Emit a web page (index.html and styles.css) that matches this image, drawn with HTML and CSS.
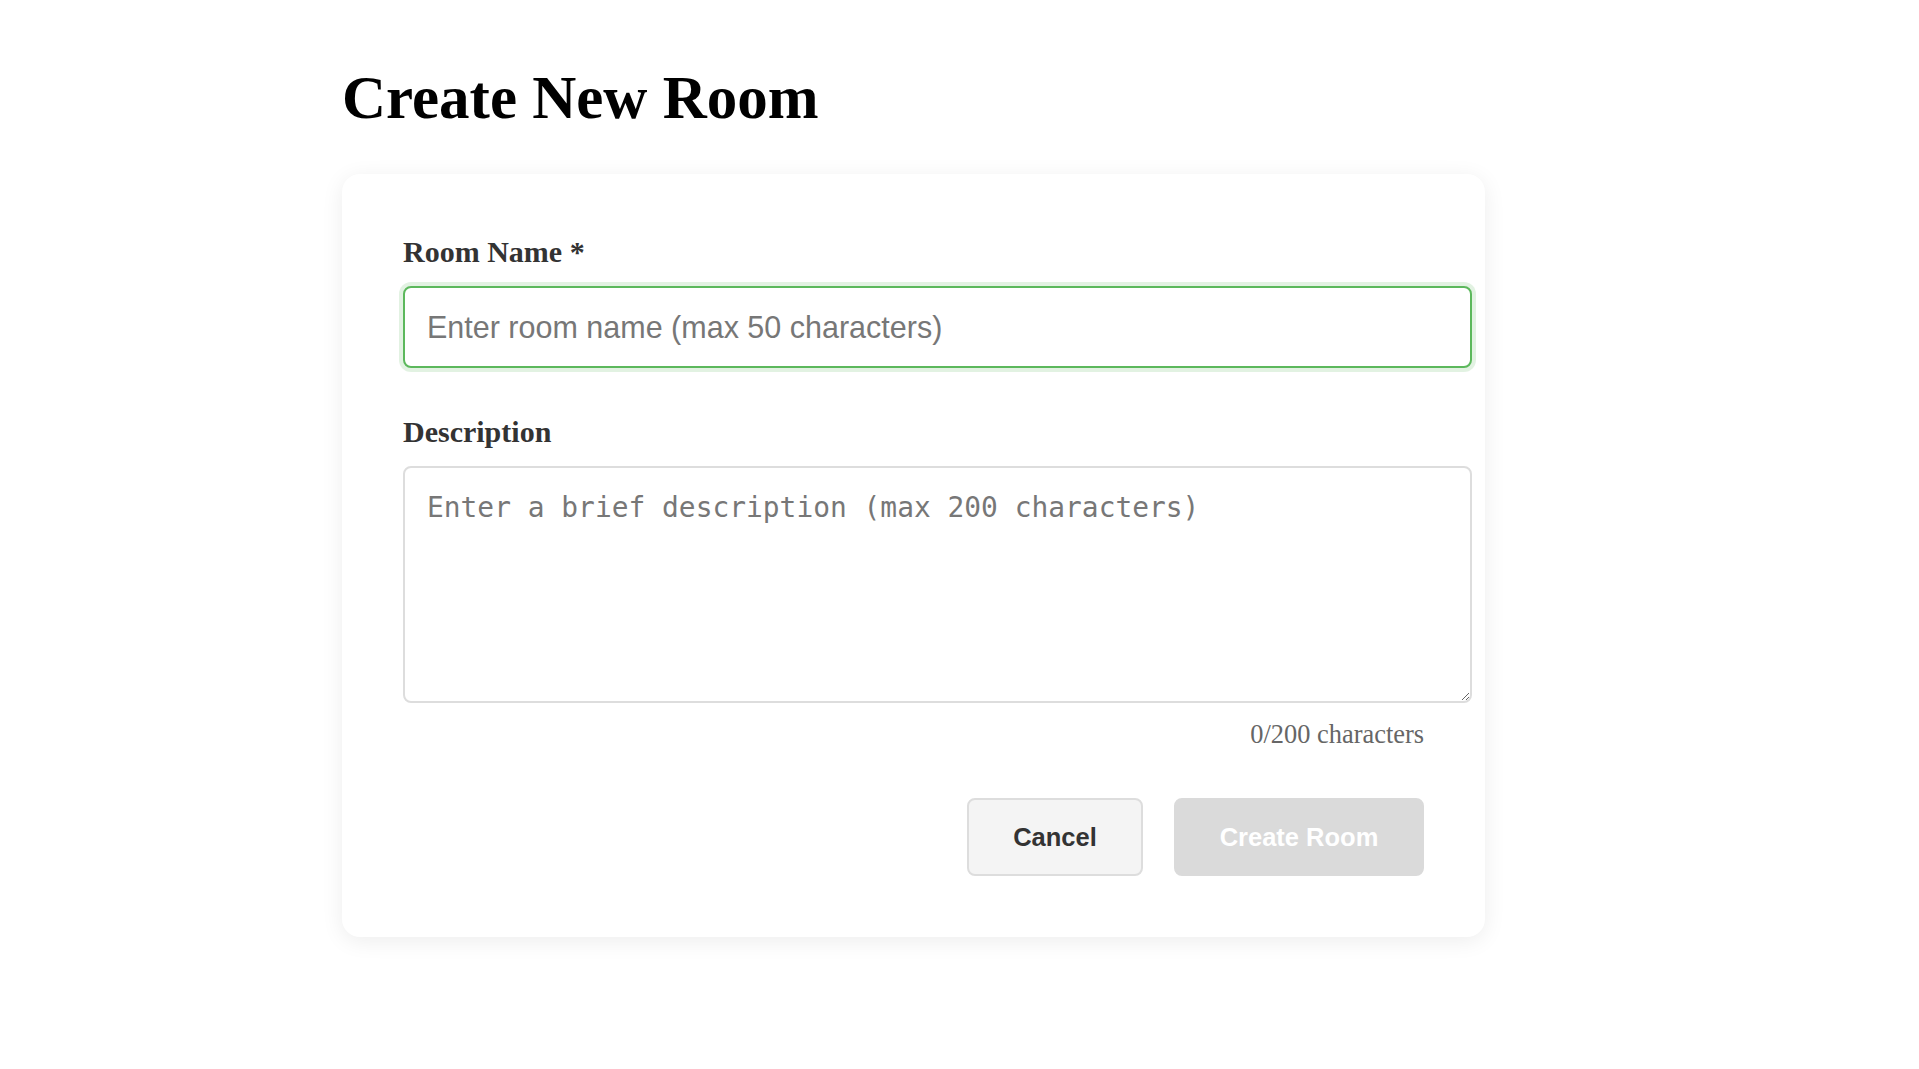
FILE: index.html
```html
<!DOCTYPE html>
<html lang="en">
<head>
<meta charset="utf-8">
<title>Create New Room</title>
<link rel="stylesheet" href="styles.css">
</head>
<body>
<div class="page">
  <h1 class="page-title">Create New Room</h1>
  <form class="card">
    <div class="field">
      <label class="field-label" for="room-name">Room Name *</label>
      <input class="text-input text-input--active" id="room-name" type="text" maxlength="50" placeholder="Enter room name (max 50 characters)" autofocus>
    </div>
    <div class="field field--last">
      <label class="field-label" for="room-desc">Description</label>
      <textarea class="text-area" id="room-desc" maxlength="200" placeholder="Enter a brief description (max 200 characters)"></textarea>
      <div class="char-count">0/200 characters</div>
    </div>
    <div class="actions">
      <button type="button" class="btn btn--cancel">Cancel</button>
      <button type="submit" class="btn btn--create" disabled>Create Room</button>
    </div>
  </form>
</div>
</body>
</html>
```
FILE: styles.css
```css
html, body {
  margin: 0;
  padding: 0;
  background: #ffffff;
}

body {
  font-family: "Liberation Serif", "Times New Roman", serif;
  color: #000;
}

.page {
  margin-left: 342px;
  width: 1143px;
  padding-top: 64px;
  padding-bottom: 80px;
}

.page-title {
  margin: 0 0 43px 0;
  font-family: "Liberation Serif", "Times New Roman", serif;
  font-weight: bold;
  font-size: 61px;
  line-height: 67px;
  color: #000;
}

.card {
  background: #ffffff;
  border-radius: 18px;
  padding: 61px;
  box-shadow: 0 4px 22px rgba(0, 0, 0, 0.075);
}

.field {
  margin-bottom: 47px;
}

.field--last {
  margin-bottom: 0;
}

.field-label {
  display: block;
  font-family: "Liberation Serif", "Times New Roman", serif;
  font-weight: bold;
  font-size: 30px;
  line-height: 33px;
  color: #333333;
  margin-bottom: 18px;
}

.text-input {
  display: block;
  box-sizing: content-box;
  width: 100%;
  height: 36px;
  padding: 21px 22px;
  margin: 0;
  border: 2px solid #dddddd;
  border-radius: 8px;
  font-family: "Liberation Sans", Arial, sans-serif;
  font-size: 30.5px;
  line-height: 36px;
  color: #333333;
  background: #ffffff;
  outline: none;
  caret-color: #333333;
}

.text-input--active,
.text-input:focus {
  border-color: #5cb85c;
  box-shadow: 0 0 0 4px rgba(92, 184, 92, 0.18);
}

.text-input::placeholder {
  color: #777777;
}

.text-area {
  display: block;
  box-sizing: content-box;
  width: 100%;
  height: 189px;
  padding: 22px 22px;
  margin: 0;
  border: 2px solid #dddddd;
  border-radius: 8px;
  font-family: "DejaVu Sans Mono", "Liberation Mono", monospace;
  font-size: 27.9px;
  line-height: 36px;
  color: #333333;
  background: #ffffff;
  outline: none;
}

.text-area::placeholder {
  color: #777777;
}

.char-count {
  margin-top: 16px;
  text-align: right;
  font-family: "Liberation Serif", "Times New Roman", serif;
  font-size: 26.4px;
  line-height: 30px;
  color: #666666;
}

.actions {
  display: flex;
  justify-content: flex-end;
  gap: 31px;
  margin-top: 49px;
}

.btn {
  box-sizing: border-box;
  height: 78px;
  padding: 0;
  border-radius: 8px;
  font-family: "Liberation Sans", Arial, sans-serif;
  font-weight: bold;
  font-size: 25.5px;
  line-height: 30px;
  white-space: nowrap;
  text-align: center;
  cursor: pointer;
}

.btn--cancel {
  width: 176px;
  background: #f4f4f4;
  border: 2px solid #dddddd;
  color: #333333;
}

.btn--create {
  width: 250px;
  background: #dadada;
  border: 2px solid #dadada;
  color: #ffffff;
  cursor: not-allowed;
}
```
